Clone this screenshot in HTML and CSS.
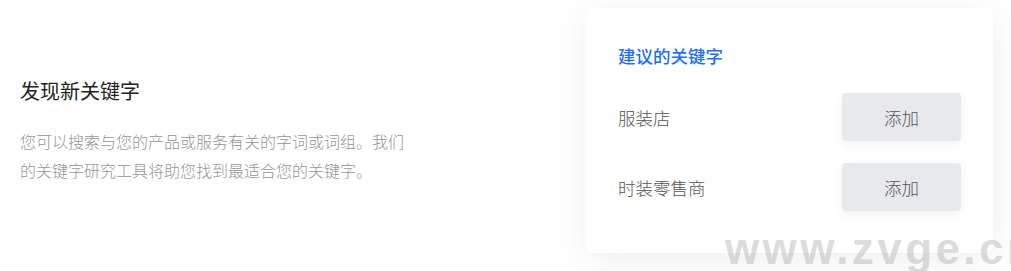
FILE: index.html
```html
<!DOCTYPE html>
<html lang="zh-CN">
<head>
<meta charset="utf-8">
<title>发现新关键字</title>
<link rel="stylesheet" href="styles.css">
</head>
<body>
<div class="page">
  <section class="intro">
    <h2 class="intro-title">发现新关键字</h2>
    <p class="intro-text">您可以搜索与您的产品或服务有关的字词或词组。我们的关键字研究工具将助您找到最适合您的关键字。</p>
  </section>
  <section class="card">
    <h3 class="card-title">建议的关键字</h3>
    <div class="row">
      <span class="kw">服装店</span>
      <button class="add-btn">添加</button>
    </div>
    <div class="row">
      <span class="kw">时装零售商</span>
      <button class="add-btn">添加</button>
    </div>
  </section>
</div>
<div class="watermark">www.zvge.cn</div>
</body>
</html>
```
FILE: styles.css
```css
html, body {
  margin: 0;
  padding: 0;
  background: #ffffff;
  overflow: hidden;
}
body {
  width: 1011px;
  height: 271px;
  position: relative;
  font-family: "Noto Sans CJK SC", "Noto Sans", sans-serif;
}
.page {
  display: flex;
  align-items: center;
  padding: 8px 18px 0 20px;
}
.intro {
  flex: 1;
}
.intro-title {
  margin: 0;
  font-size: 20px;
  font-weight: 400;
  line-height: 28px;
  color: #222222;
}
.intro-text {
  margin: 22px 0 0;
  width: 390px;
  font-size: 16px;
  font-weight: 300;
  line-height: 29px;
  color: #959595;
}
.card {
  width: 408px;
  box-sizing: border-box;
  height: 245px;
  padding: 36px 32px 0 33px;
  background: #ffffff;
  border-radius: 8px;
  box-shadow: 0 6px 36px rgba(0, 0, 0, 0.07);
  display: flex;
  flex-direction: column;
  gap: 22px;
}
.card-title {
  margin: 0 0 3px;
  font-size: 17.5px;
  line-height: 24px;
  font-weight: 500;
  color: #1f6ff0;
}
.row {
  display: flex;
  align-items: center;
  justify-content: space-between;
}
.kw {
  font-size: 17.5px;
  font-weight: 300;
  color: #555555;
}
.add-btn {
  width: 119px;
  height: 48px;
  border: none;
  border-radius: 4px;
  background: #e8e9ed;
  box-shadow: 0 4px 12px rgba(0, 0, 0, 0.05);
  font-family: "Noto Sans CJK SC", "Noto Sans", sans-serif;
  font-size: 17.5px;
  font-weight: 300;
  color: #555555;
  padding: 0;
}
.watermark {
  position: absolute;
  left: 725px;
  top: 227px;
  font-family: "Liberation Sans", Arial, sans-serif;
  font-weight: 700;
  font-size: 44px;
  line-height: 44px;
  letter-spacing: 3.4px;
  color: rgba(170, 170, 170, 0.42);
  white-space: nowrap;
}
```
